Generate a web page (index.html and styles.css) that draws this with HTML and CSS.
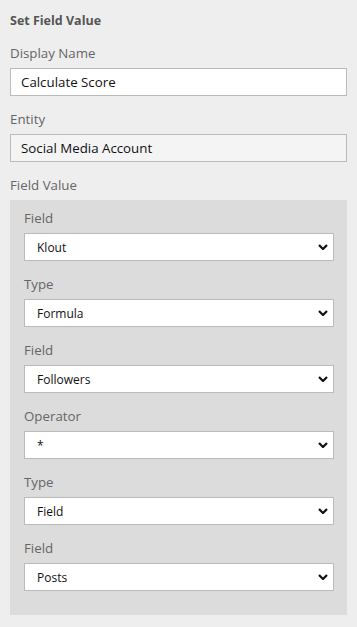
FILE: index.html
```html
<!DOCTYPE html>
<html lang="en">
<head>
  <meta charset="UTF-8">
  <meta name="viewport" content="width=device-width, initial-scale=1">
  <title>Set Field Value</title>
  <link rel="stylesheet" href="styles.css">
</head>
<body>
  <div class="panel">
    <h3 class="panel-title">Set Field Value</h3>

    <div class="field">
      <label class="field-label">Display Name</label>
      <div class="text-input">Calculate Score</div>
    </div>

    <div class="field">
      <label class="field-label">Entity</label>
      <div class="text-input readonly">Social Media Account</div>
    </div>

    <div class="field">
      <label class="field-label">Field Value</label>
      <div class="value-box">
        <div class="field">
          <label class="field-label">Field</label>
          <div class="select"><span>Klout</span><svg class="chevron" viewBox="0 0 10 6"><path d="M1 1 L5 5 L9 1"/></svg></div>
        </div>
        <div class="field">
          <label class="field-label">Type</label>
          <div class="select"><span>Formula</span><svg class="chevron" viewBox="0 0 10 6"><path d="M1 1 L5 5 L9 1"/></svg></div>
        </div>
        <div class="field">
          <label class="field-label">Field</label>
          <div class="select"><span>Followers</span><svg class="chevron" viewBox="0 0 10 6"><path d="M1 1 L5 5 L9 1"/></svg></div>
        </div>
        <div class="field">
          <label class="field-label">Operator</label>
          <div class="select"><span>*</span><svg class="chevron" viewBox="0 0 10 6"><path d="M1 1 L5 5 L9 1"/></svg></div>
        </div>
        <div class="field">
          <label class="field-label">Type</label>
          <div class="select"><span>Field</span><svg class="chevron" viewBox="0 0 10 6"><path d="M1 1 L5 5 L9 1"/></svg></div>
        </div>
        <div class="field last">
          <label class="field-label">Field</label>
          <div class="select"><span>Posts</span><svg class="chevron" viewBox="0 0 10 6"><path d="M1 1 L5 5 L9 1"/></svg></div>
        </div>
      </div>
    </div>
  </div>
</body>
</html>
```

FILE: styles.css
```css
body {
  margin: 0;
  padding: 0;
  background: #eeeeee;
  font-family: 'Open Sans', 'Noto Sans', Arial, sans-serif;
  color: #222;
}
.panel {
  padding: 10px 10px 0 10px;
}
.panel-title {
  margin: 0 0 12px 0;
  font-size: 12.5px;
  font-weight: 700;
  line-height: 21px;
  color: #555;
}
.field {
  display: flex;
  flex-direction: column;
  margin-bottom: 13px;
}
.field.last {
  margin-bottom: 0;
}
.field-label {
  display: block;
  font-size: 13.3px;
  line-height: 21px;
  color: #666;
  margin-bottom: 4px;
}
.text-input {
  height: 26px;
  line-height: 27px;
  border: 1px solid #bbbbbb;
  background: #fff;
  padding: 0 10px;
  font-size: 13.3px;
  color: #111;
}
.text-input.readonly {
  background: #f4f4f4;
}
.value-box {
  background: #dcdcdc;
  padding: 8px 13px 24px 14px;
}
.select {
  display: flex;
  align-items: center;
  justify-content: space-between;
  height: 26px;
  border: 1px solid #bbbbbb;
  background: #fff;
  padding: 0 5px 0 12px;
  font-size: 12px;
  color: #111;
}
.select span {
  padding-top: 1px;
}
.chevron {
  width: 10px;
  height: 6px;
  fill: none;
  stroke: #111;
  stroke-width: 2.2;
}
```
